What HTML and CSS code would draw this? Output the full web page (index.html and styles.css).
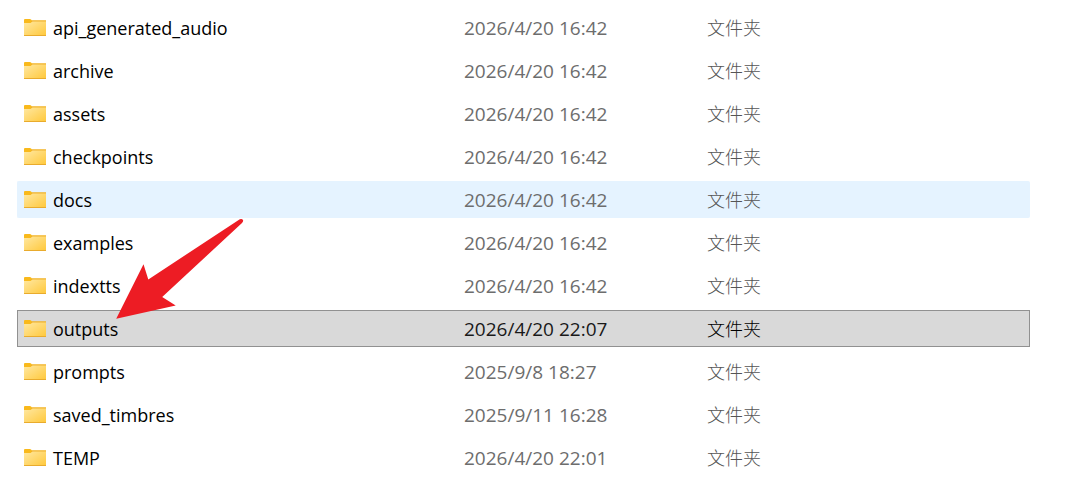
FILE: index.html
```html
<!DOCTYPE html>
<html lang="zh-CN">
<head>
<meta charset="utf-8">
<title>文件夹</title>
<link rel="stylesheet" href="styles.css">
</head>
<body>
<svg class="defs" aria-hidden="true">
<defs>
<linearGradient id="front" x1="0" y1="0" x2="1" y2="1"><stop offset="0" stop-color="#ffe8a2"/><stop offset="1" stop-color="#ffc83a"/></linearGradient>
<symbol id="folder" viewBox="0 0 22 18"><path d="M0 1Q0 0 1 0H6Q7 0 8 1.500L22 1.500V6H0Z" fill="#f9b91b"/><path d="M8 1.500H22V3H7Z" fill="#eeb02c"/><path d="M0 4H6.500L8.500 2.500H22V16.500Q22 17 21.500 17H.5Q0 17 0 16.500Z" fill="url(#front)"/><path d="M0 16H22V16.500Q22 17 21.500 17H.5Q0 17 0 16.500Z" fill="#e9ab2d"/></symbol>
</defs>
</svg>
<main class="explorer">
<table class="files">
<colgroup><col class="col-name"><col class="col-date"><col class="col-type"></colgroup>
<tbody>
<tr><td><span class="name"><svg class="icon"><use href="#folder"/></svg>api_generated_audio</span></td><td class="date">2026/4/20 16:42</td><td class="type">文件夹</td></tr>
<tr><td><span class="name"><svg class="icon"><use href="#folder"/></svg>archive</span></td><td class="date">2026/4/20 16:42</td><td class="type">文件夹</td></tr>
<tr><td><span class="name"><svg class="icon"><use href="#folder"/></svg>assets</span></td><td class="date">2026/4/20 16:42</td><td class="type">文件夹</td></tr>
<tr><td><span class="name"><svg class="icon"><use href="#folder"/></svg>checkpoints</span></td><td class="date">2026/4/20 16:42</td><td class="type">文件夹</td></tr>
<tr class="hovered"><td><span class="name"><svg class="icon"><use href="#folder"/></svg>docs</span></td><td class="date">2026/4/20 16:42</td><td class="type">文件夹</td></tr>
<tr><td><span class="name"><svg class="icon"><use href="#folder"/></svg>examples</span></td><td class="date">2026/4/20 16:42</td><td class="type">文件夹</td></tr>
<tr><td><span class="name"><svg class="icon"><use href="#folder"/></svg>indextts</span></td><td class="date">2026/4/20 16:42</td><td class="type">文件夹</td></tr>
<tr class="selected"><td><span class="name"><svg class="icon"><use href="#folder"/></svg>outputs</span></td><td class="date">2026/4/20 22:07</td><td class="type">文件夹</td></tr>
<tr><td><span class="name"><svg class="icon"><use href="#folder"/></svg>prompts</span></td><td class="date">2025/9/8 18:27</td><td class="type">文件夹</td></tr>
<tr><td><span class="name"><svg class="icon"><use href="#folder"/></svg>saved_timbres</span></td><td class="date">2025/9/11 16:28</td><td class="type">文件夹</td></tr>
<tr><td><span class="name"><svg class="icon"><use href="#folder"/></svg>TEMP</span></td><td class="date">2026/4/20 22:01</td><td class="type">文件夹</td></tr>
</tbody>
</table>
<svg class="arrow" viewBox="0 0 130 102" aria-hidden="true"><path d="M.2 100.700L27.500 46.300L32.300 61.500L123.800 1.200Q126 .4 127 2Q127.600 3.400 126 5L46.200 79L59.700 87.600Z" fill="#ed1c24"/></svg>
</main>
</body>
</html>
```
FILE: styles.css
```css
body {
  margin: 0;
  background: #fff;
  font-family: "Open Sans", "Noto Sans", "Noto Sans CJK SC", sans-serif;
  font-size: 18px;
  line-height: 24px;
}

.defs {
  position: absolute;
  width: 0;
  height: 0;
}

.explorer {
  position: relative;
  padding: 3px 35px 0 17px;
}

.files {
  width: 100%;
  table-layout: fixed;
  border-collapse: separate;
  border-spacing: 0 6px;
  color: #6d6d6d;
}

.col-name { width: 447px; }
.col-date { width: 243px; }

.files td {
  height: 35px;
  padding: 0;
  border: solid transparent;
  border-width: 1px 0;
}

.files td:first-child {
  padding-left: 6px;
  border-left-width: 1px;
  color: #000;
}

.files td:last-child { border-right-width: 1px; }

.files .date { font-size: 19px; }

.files .type {
  font-weight: 300;
  color: #555;
}

.name {
  display: flex;
  align-items: center;
  gap: 7px;
}

.icon {
  width: 22px;
  height: 18px;
}

.hovered td {
  background: #e5f3ff;
  border-color: #e5f3ff;
}

.hovered td:first-child { border-radius: 2px 0 0 2px; }
.hovered td:last-child { border-radius: 0 2px 2px 0; }

.files .selected td {
  background: #d9d9d9;
  border-color: #919191;
  color: #000;
}

.files .selected .date { color: #191919; }

.arrow {
  position: absolute;
  left: 116px;
  top: 218px;
  width: 130px;
  height: 102px;
}
```
